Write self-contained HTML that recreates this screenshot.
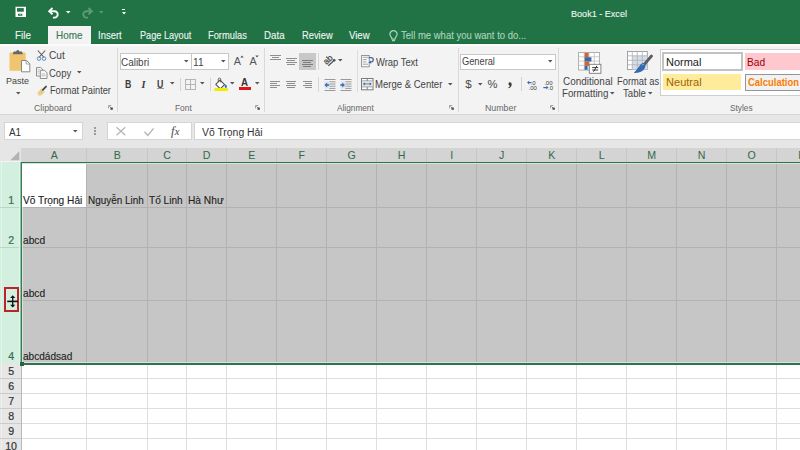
<!DOCTYPE html>
<html><head><meta charset="utf-8">
<style>
*{margin:0;padding:0;box-sizing:border-box}
html,body{width:800px;height:450px;overflow:hidden;background:#fff;font-family:"Liberation Sans",sans-serif;-webkit-font-smoothing:antialiased}
.a{position:absolute;white-space:nowrap;line-height:1}
.r{position:absolute}
svg{overflow:visible}
</style></head><body>
<div class="r" style="left:0px;top:0px;width:800px;height:44px;background:#217346;"></div>
<svg style="position:absolute;left:15px;top:6px" width="12" height="12" viewBox="0 0 12 12"><rect x="0.5" y="0.75" width="10.5" height="10.25" fill="#fff"/><rect x="2" y="2.1" width="6.8" height="3.6" fill="#217346"/><rect x="3" y="7.75" width="4.3" height="2" fill="#217346"/><rect x="4.8" y="7.75" width="0.8" height="1.2" fill="#fff"/></svg>
<svg style="position:absolute;left:48px;top:7px" width="12" height="11" viewBox="0 0 12 11"><path d="M4.5 1L1.2 4.2l3.3 3.2" fill="none" stroke="#fff" stroke-width="1.9"/><path d="M1.8 4.2h4.7a3.2 3.2 0 0 1 0 6.4h-1.5" fill="none" stroke="#fff" stroke-width="1.9"/></svg>
<svg style="position:absolute;left:66.25px;top:10.75px" width="4.5" height="2.5"><path d="M0 0h4.5l-2.25 2.5z" fill="#fff"/></svg>
<svg style="position:absolute;left:81px;top:7px" width="12" height="11" viewBox="0 0 12 11"><path d="M7.5 1l3.3 3.2-3.3 3.2" fill="none" stroke="#5f9a79" stroke-width="1.9"/><path d="M10.2 4.2h-4.7a3.2 3.2 0 0 0 0 6.4h1.5" fill="none" stroke="#5f9a79" stroke-width="1.9"/></svg>
<svg style="position:absolute;left:99.25px;top:10.75px" width="4.5" height="2.5"><path d="M0 0h4.5l-2.25 2.5z" fill="#5f9a79"/></svg>
<div class="r" style="left:122px;top:9px;width:3px;height:1.2px;background:#fff;"></div>
<svg style="position:absolute;left:121.50px;top:11.95px" width="4" height="2.5"><path d="M0 0h4l-2.0 2.5z" fill="#fff"/></svg>
<div class="r" style="left:0px;top:43px;width:48px;height:1px;background:#1e6c41;"></div>
<div class="r" style="left:91px;top:43px;width:709px;height:1px;background:#1e6c41;"></div>
<div class="r" style="left:48px;top:25.5px;width:43px;height:18.5px;background:#f3f3f3;"></div>
<svg style="position:absolute;left:388.5px;top:29.5px" width="9" height="12" viewBox="0 0 9 12"><path d="M4.5 0.7a3.6 3.6 0 0 0-3.6 3.6c0 1.5 1 2.4 1.7 3.3l0.4 1.6h3l0.4-1.6c0.7-0.9 1.7-1.8 1.7-3.3a3.6 3.6 0 0 0-3.6-3.6z" fill="none" stroke="#a8d5b8" stroke-width="1.2"/><path d="M3 10.6h3" stroke="#a8d5b8" stroke-width="1.3"/></svg>
<div class="r" style="left:0px;top:44px;width:800px;height:70px;background:#f3f3f3;"></div>
<div class="r" style="left:0px;top:44px;width:800px;height:1.5px;background:#fbfbfb;"></div>
<div class="r" style="left:0px;top:114px;width:800px;height:1px;background:#d6d6d6;"></div>
<svg style="position:absolute;left:8px;top:49px" width="24" height="25" viewBox="0 0 24 25"><rect x="1.5" y="3.4" width="16.2" height="18.4" rx="0.6" fill="#f0c56f"/><path d="M4.8 5.2l0.8-2.6h2.6a1.6 1.6 0 0 1 3.2 0h2.6l0.8 2.6z" fill="#666"/><path d="M13.5 11.5h5l3.3 3.3v8h-8.3z" fill="#fff" stroke="#7d7d7d" stroke-width="0.9"/><path d="M18.2 11.7v3.3h3.3" fill="none" stroke="#8a8a8a" stroke-width="0.8"/></svg>
<svg style="position:absolute;left:15.75px;top:92.05px" width="4.5" height="2.5"><path d="M0 0h4.5l-2.25 2.5z" fill="#555"/></svg>
<svg style="position:absolute;left:36px;top:49.5px" width="11" height="11" viewBox="0 0 11 11"><path d="M1.8 0.5l6.3 7M9.2 0.5L2.9 7.5" stroke="#5a5a5a" stroke-width="1.1"/><circle cx="3" cy="8.6" r="1.8" fill="none" stroke="#5d8dc8" stroke-width="1"/><circle cx="8" cy="8.6" r="1.8" fill="none" stroke="#5d8dc8" stroke-width="1"/></svg>
<svg style="position:absolute;left:36px;top:67px" width="11.5" height="12" viewBox="0 0 11.5 12"><path d="M0.5 0.5h4.2l2.3 2.3v6.2h-6.5z" fill="#f7f7f7" stroke="#858585" stroke-width="0.9"/><path d="M4.3 3.3h4.2l2.5 2.5v5.7h-6.7z" fill="#f7f7f7" stroke="#858585" stroke-width="0.9"/><path d="M5.6 7h3.8M5.6 8.8h3.8M1.6 2.6h2M1.6 4.4h1.8M1.6 6.2h1.8" stroke="#a5a5a5" stroke-width="0.7"/></svg>
<svg style="position:absolute;left:77.05px;top:71.05px" width="4.5" height="2.5"><path d="M0 0h4.5l-2.25 2.5z" fill="#555"/></svg>
<svg style="position:absolute;left:36.5px;top:84.5px" width="11" height="10.5" viewBox="0 0 11 10.5"><path d="M0.8 7.2l3.6-3.8 3.4 3.4-3.7 3.6c-1 0.4-2.6 0.2-3.3-0.4z" fill="#ead08c"/><path d="M3.2 5.5l2.6 2.6" stroke="#d6b664" stroke-width="0.7"/><path d="M5.8 4.8l3.2-3.2" stroke="#4a4a4a" stroke-width="1.9" stroke-linecap="round"/></svg>
<svg style="position:absolute;left:108.1px;top:105px" width="5" height="5" viewBox="0 0 5 5"><path d="M0.5 3.3V0.5H3.3" stroke="#9a9a9a" stroke-width="0.9" fill="none"/><path d="M1.5 1.5l2 2" stroke="#666" stroke-width="0.8"/><rect x="2.5" y="2.5" width="2.3" height="2.3" fill="#4a4a4a"/></svg>
<div class="r" style="left:117px;top:48px;width:1px;height:64px;background:#dadada;"></div>
<div class="r" style="left:120px;top:53px;width:109px;height:17px;background:#fff;border:1px solid #c8c8c8"></div>
<div class="r" style="left:191px;top:54px;width:1px;height:15px;background:#c8c8c8;"></div>
<svg style="position:absolute;left:183.75px;top:59.95px" width="4.5" height="2.5"><path d="M0 0h4.5l-2.25 2.5z" fill="#555"/></svg>
<svg style="position:absolute;left:221.25px;top:59.95px" width="4.5" height="2.5"><path d="M0 0h4.5l-2.25 2.5z" fill="#555"/></svg>
<div class="a" style="left:233.80px;top:56.13px;font-size:10.8px;color:#555;">A</div>
<svg style="position:absolute;left:239.5px;top:54.5px" width="4" height="3" viewBox="0 0 4 3"><path d="M0.3 2.6L2 0.4l1.7 2.2z" fill="#555"/></svg>
<div class="a" style="left:249.40px;top:56.13px;font-size:10.8px;color:#555;">A</div>
<svg style="position:absolute;left:255.2px;top:54.8px" width="4" height="3" viewBox="0 0 4 3"><path d="M0.3 0.4L2 2.6l1.7-2.2z" fill="#555"/></svg>
<div class="a" style="left:124.70px;top:80.32px;font-size:10.2px;color:#3c3c3c;font-weight:bold;transform:scaleX(0.86);transform-origin:0 0">B</div>
<div class="a" style="left:141.40px;top:79.62px;font-size:10.2px;color:#3c3c3c;font-style:italic;font-weight:bold;font-family:'Liberation Serif',serif">I</div>
<div class="a" style="left:156.80px;top:80.32px;font-size:10.2px;color:#3c3c3c;font-weight:bold;transform:scaleX(0.86);transform-origin:0 0">U</div>
<div class="r" style="left:157px;top:88.3px;width:6.6px;height:1.2px;background:#999;"></div>
<svg style="position:absolute;left:169.95px;top:82.05px" width="4.5" height="2.5"><path d="M0 0h4.5l-2.25 2.5z" fill="#555"/></svg>
<div class="r" style="left:179.5px;top:78px;width:1px;height:12.5px;background:#d3d3d3;"></div>
<svg style="position:absolute;left:185px;top:79px" width="11" height="11" viewBox="0 0 11 11"><rect x="0.5" y="0.5" width="10" height="10" fill="none" stroke="#b5b5b5"/><path d="M5.5 0.5v10M0.5 5.5h10" stroke="#b5b5b5"/></svg>
<svg style="position:absolute;left:199.95px;top:82.05px" width="4.5" height="2.5"><path d="M0 0h4.5l-2.25 2.5z" fill="#555"/></svg>
<div class="r" style="left:210px;top:78px;width:1px;height:12.5px;background:#d3d3d3;"></div>
<svg style="position:absolute;left:213.5px;top:77.5px" width="15" height="14" viewBox="0 0 15 14"><path d="M1.8 6.4l4.3-4.3 4.5 4.5-4.3 4.3z" fill="#fff" stroke="#505050" stroke-width="1.1" stroke-linejoin="round"/><path d="M4.3 3.9v-2.6a1.2 1.2 0 0 1 2.4 0v3.2" fill="none" stroke="#505050" stroke-width="0.9"/><path d="M10.3 6.3c1.3 0.1 2.2 0.8 2.6 1.8c0.3 1-0.3 2-1.2 1.8c-0.9-0.2-1-1.2-0.9-2z" fill="#3a78c2"/><rect x="0.3" y="10.1" width="13.7" height="3" rx="0.5" fill="#f2ec00"/></svg>
<svg style="position:absolute;left:229.95px;top:82.05px" width="4.5" height="2.5"><path d="M0 0h4.5l-2.25 2.5z" fill="#555"/></svg>
<div class="a" style="left:240.60px;top:77.16px;font-size:10.6px;color:#333;font-weight:bold;transform:scaleX(0.92);transform-origin:0 0">A</div>
<div class="r" style="left:238.8px;top:87px;width:12.5px;height:3px;background:#e01515;"></div>
<svg style="position:absolute;left:255.25px;top:82.05px" width="4.5" height="2.5"><path d="M0 0h4.5l-2.25 2.5z" fill="#555"/></svg>
<svg style="position:absolute;left:255.3px;top:105px" width="5" height="5" viewBox="0 0 5 5"><path d="M0.5 3.3V0.5H3.3" stroke="#9a9a9a" stroke-width="0.9" fill="none"/><path d="M1.5 1.5l2 2" stroke="#666" stroke-width="0.8"/><rect x="2.5" y="2.5" width="2.3" height="2.3" fill="#4a4a4a"/></svg>
<div class="r" style="left:263.5px;top:48px;width:1px;height:64px;background:#dadada;"></div>
<div class="r" style="left:269.5px;top:54.6px;width:11.2px;height:1px;background:#8e8e8e;"></div>
<div class="r" style="left:271.5px;top:56.6px;width:7.2px;height:1px;background:#8e8e8e;"></div>
<div class="r" style="left:269.5px;top:58.6px;width:11.2px;height:1px;background:#8e8e8e;"></div>
<div class="r" style="left:285.8px;top:57.9px;width:11.2px;height:1px;background:#8e8e8e;"></div>
<div class="r" style="left:287.3px;top:59.9px;width:8.2px;height:1px;background:#8e8e8e;"></div>
<div class="r" style="left:285.8px;top:61.9px;width:11.2px;height:1px;background:#8e8e8e;"></div>
<div class="r" style="left:287.3px;top:63.9px;width:8.2px;height:1px;background:#8e8e8e;"></div>
<div class="r" style="left:299.3px;top:52.8px;width:16.3px;height:16.9px;background:#c8c8c8;"></div>
<div class="r" style="left:301.6px;top:60.2px;width:11.2px;height:1px;background:#7c7c7c;"></div>
<div class="r" style="left:303.1px;top:62.2px;width:8.2px;height:1px;background:#7c7c7c;"></div>
<div class="r" style="left:301.6px;top:64.2px;width:11.2px;height:1px;background:#7c7c7c;"></div>
<div class="r" style="left:303.1px;top:66.2px;width:8.2px;height:1px;background:#7c7c7c;"></div>
<div class="r" style="left:318.4px;top:53px;width:1px;height:17px;background:#d6d6d6;"></div>
<svg style="position:absolute;left:322px;top:53px" width="15" height="15" viewBox="0 0 15 15"><text x="0" y="0" font-family="Liberation Sans" font-size="8.6" fill="#4a4a4a" stroke="#4a4a4a" stroke-width="0.25" transform="translate(4.6 12.1) rotate(-45)">ab</text><path d="M6.3 12.8l5.6-5.2" stroke="#4a4a4a" stroke-width="1.2"/><circle cx="12.2" cy="7.3" r="1.25" fill="#4a4a4a"/></svg>
<svg style="position:absolute;left:337.55px;top:59.45px" width="4.5" height="2.5"><path d="M0 0h4.5l-2.25 2.5z" fill="#555"/></svg>
<div class="r" style="left:270px;top:80.6px;width:9.6px;height:1px;background:#8e8e8e;"></div>
<div class="r" style="left:270px;top:82.8px;width:7.2px;height:1px;background:#8e8e8e;"></div>
<div class="r" style="left:270px;top:85.0px;width:9.6px;height:1px;background:#8e8e8e;"></div>
<div class="r" style="left:270px;top:87.2px;width:7.2px;height:1px;background:#8e8e8e;"></div>
<div class="r" style="left:285.8px;top:80.6px;width:10.5px;height:1px;background:#8e8e8e;"></div>
<div class="r" style="left:287.3px;top:82.8px;width:7.5px;height:1px;background:#8e8e8e;"></div>
<div class="r" style="left:285.8px;top:85.0px;width:10.5px;height:1px;background:#8e8e8e;"></div>
<div class="r" style="left:287.3px;top:87.2px;width:7.5px;height:1px;background:#8e8e8e;"></div>
<div class="r" style="left:302.5px;top:80.6px;width:9.6px;height:1px;background:#8e8e8e;"></div>
<div class="r" style="left:304.9px;top:82.8px;width:7.2px;height:1px;background:#8e8e8e;"></div>
<div class="r" style="left:302.5px;top:85.0px;width:9.6px;height:1px;background:#8e8e8e;"></div>
<div class="r" style="left:304.9px;top:87.2px;width:7.2px;height:1px;background:#8e8e8e;"></div>
<div class="r" style="left:318.4px;top:77px;width:1px;height:15px;background:#d6d6d6;"></div>
<svg style="position:absolute;left:323.5px;top:78.5px" width="12" height="12" viewBox="0 0 12 12"><path d="M0.5 0.5h11M5.3 2.8h6.2M5.3 5h6.2M5.3 7.2h6.2M5.3 9.4h6.2M0.5 11.5h11" stroke="#8e8e8e" stroke-width="0.9"/><rect x="0.3" y="2.5" width="4.8" height="7" fill="#dde6f0"/><path d="M0.4 6l2.8-2.6v5.2z" fill="#3b6db3"/><path d="M2.3 6h2.8" stroke="#3b6db3" stroke-width="1.6"/></svg>
<svg style="position:absolute;left:339.8px;top:78.5px" width="12" height="12" viewBox="0 0 12 12"><path d="M0.5 0.5h11M5.3 2.8h6.2M5.3 5h6.2M5.3 7.2h6.2M5.3 9.4h6.2M0.5 11.5h11" stroke="#8e8e8e" stroke-width="0.9"/><rect x="0.3" y="2.5" width="4.8" height="7" fill="#dde6f0"/><path d="M5 6l-2.8-2.6v5.2z" fill="#3b6db3"/><path d="M0.3 6h2.8" stroke="#3b6db3" stroke-width="1.6"/></svg>
<div class="r" style="left:356.5px;top:50px;width:1px;height:42px;background:#dcdcdc;"></div>
<svg style="position:absolute;left:361px;top:55px" width="13" height="12.5" viewBox="0 0 13 12.5"><rect x="0.6" y="0.5" width="7.6" height="11.3" fill="#fafafa" stroke="#8a8a8a" stroke-width="0.9"/><path d="M1.8 2.3h5.2M1.8 4.6h4M1.8 6.9h3.6M1.8 9.2h5.2" stroke="#9a9a9a" stroke-width="0.9"/><path d="M7.6 2.6h2.4a2.1 2.1 0 0 1 0.2 4.3l-1.6 0.6" fill="none" stroke="#3f66a3" stroke-width="1.3"/><path d="M7.3 7.8l2.4-2.3 0.6 3.1z" fill="#3f66a3"/></svg>
<svg style="position:absolute;left:361px;top:78px" width="12.5" height="12" viewBox="0 0 12.5 12"><rect x="0.5" y="0.5" width="11.5" height="11.3" fill="#fff" stroke="#7a7a7a" stroke-width="1"/><path d="M1 3h10.5M1 8.8h10.5M6.25 0.5v2.5M6.25 8.8v3" stroke="#7a7a7a" stroke-width="0.9"/><rect x="1" y="3.5" width="10.5" height="4.8" fill="#e3e9f1"/><path d="M3 5.9h6.5" stroke="#6d86a8" stroke-width="1.1"/><path d="M1.8 5.9l2-1.7v3.4zM10.7 5.9l-2-1.7v3.4z" fill="#4b6284"/></svg>
<svg style="position:absolute;left:447.55px;top:83.15px" width="4.5" height="2.5"><path d="M0 0h4.5l-2.25 2.5z" fill="#555"/></svg>
<svg style="position:absolute;left:449.3px;top:105px" width="5" height="5" viewBox="0 0 5 5"><path d="M0.5 3.3V0.5H3.3" stroke="#9a9a9a" stroke-width="0.9" fill="none"/><path d="M1.5 1.5l2 2" stroke="#666" stroke-width="0.8"/><rect x="2.5" y="2.5" width="2.3" height="2.3" fill="#4a4a4a"/></svg>
<div class="r" style="left:457.5px;top:48px;width:1px;height:64px;background:#dadada;"></div>
<div class="r" style="left:460px;top:53.5px;width:96px;height:16px;background:#fff;border:1px solid #c8c8c8"></div>
<svg style="position:absolute;left:548.25px;top:59.75px" width="4.5" height="2.5"><path d="M0 0h4.5l-2.25 2.5z" fill="#555"/></svg>
<div class="a" style="left:465.20px;top:77.60px;font-size:11.6px;color:#4a4a4a;">$</div>
<svg style="position:absolute;left:478.35px;top:83.15px" width="4.5" height="2.5"><path d="M0 0h4.5l-2.25 2.5z" fill="#555"/></svg>
<div class="a" style="left:487.60px;top:78.66px;font-size:11.2px;color:#4a4a4a;">%</div>
<svg style="position:absolute;left:506.5px;top:81.5px" width="5" height="6.5" viewBox="0 0 5 6.5"><path d="M2.6 0.2a2.1 2.1 0 0 1 2.1 2.3c0 1.8-1.2 3.2-3.2 3.8l-0.3-0.8c0.9-0.4 1.5-1 1.6-1.8a1.9 1.9 0 0 1-0.3-3.5z" fill="#3a3a3a"/></svg>
<div class="r" style="left:520.5px;top:77px;width:1px;height:14px;background:#d3d3d3;"></div>
<svg style="position:absolute;left:526.5px;top:80px" width="10" height="10" viewBox="0 0 10 10"><text x="3.6" y="5" font-family="Liberation Sans" font-size="6" fill="#3a3a3a">.0</text><text x="1.5" y="10" font-family="Liberation Sans" font-size="6" fill="#3a3a3a">.00</text><path d="M1.5 2.6h3" stroke="#2e6dbb" stroke-width="1.2"/><path d="M0 2.6l2.2-1.8v3.6z" fill="#2e6dbb"/></svg>
<svg style="position:absolute;left:542.5px;top:80px" width="10" height="10" viewBox="0 0 10 10"><text x="1.2" y="5" font-family="Liberation Sans" font-size="6" fill="#3a3a3a">.00</text><text x="5" y="10" font-family="Liberation Sans" font-size="6" fill="#3a3a3a">.0</text><path d="M0.3 7.6h3.5" stroke="#2e6dbb" stroke-width="1.2"/><path d="M5.5 7.6l-2.2-1.8v3.6z" fill="#2e6dbb"/></svg>
<svg style="position:absolute;left:549.8px;top:105px" width="5" height="5" viewBox="0 0 5 5"><path d="M0.5 3.3V0.5H3.3" stroke="#9a9a9a" stroke-width="0.9" fill="none"/><path d="M1.5 1.5l2 2" stroke="#666" stroke-width="0.8"/><rect x="2.5" y="2.5" width="2.3" height="2.3" fill="#4a4a4a"/></svg>
<div class="r" style="left:558px;top:48px;width:1px;height:64px;background:#dadada;"></div>
<svg style="position:absolute;left:578px;top:51.5px" width="25" height="22" viewBox="0 0 25 22"><rect x="0.5" y="0.5" width="21" height="17.5" fill="#fff" stroke="#a8a8a8" stroke-width="0.9"/><path d="M0.5 4.8h21M0.5 9.1h21M0.5 13.4h21M6.3 0.5v17.5M11 0.5v17.5M16.3 0.5v17.5" stroke="#c0c0c0" stroke-width="0.8"/><rect x="6.6" y="0.8" width="4" height="4.8" fill="#d9612a"/><rect x="6.6" y="5.3" width="6.8" height="4.2" fill="#3569b0"/><rect x="6.6" y="9.5" width="4.6" height="4.3" fill="#d9612a"/><rect x="6.6" y="13.8" width="3" height="4" fill="#3569b0"/><rect x="11.3" y="12.3" width="11.6" height="9" fill="#fff" stroke="#7a7a7a" stroke-width="0.9"/><path d="M14.2 15.6h6M14.2 18h6M18.9 13.8l-3.4 6" stroke="#333" stroke-width="0.95"/></svg>
<svg style="position:absolute;left:610.15px;top:91.95px" width="4.5" height="2.5"><path d="M0 0h4.5l-2.25 2.5z" fill="#555"/></svg>
<svg style="position:absolute;left:627px;top:51px" width="27" height="23" viewBox="0 0 27 23"><rect x="0.5" y="0.5" width="19.8" height="18" fill="#fff" stroke="#9a9a9a" stroke-width="0.9"/><rect x="5.3" y="4.8" width="15" height="13.7" fill="#d3dee9"/><path d="M0.5 4.8h19.8M0.5 9.3h19.8M0.5 13.8h19.8M5.3 0.5v18M10.3 0.5v18M15.3 0.5v18" stroke="#b0b0b0" stroke-width="0.8"/><path d="M24.5 5l-7 8.2" stroke="#5c5c5c" stroke-width="2.8" stroke-linecap="round"/><path d="M17.8 12.2c-1.5-0.6-3.2 0-4.5 1.5c-1.3 1.5-2.6 4.5-6.5 8.2c4.2 0.3 8.6-1.3 10.5-4c1.2-1.7 1.6-3.9 0.5-5.7z" fill="#3468b0"/><path d="M14.6 14.2c0.8-0.8 1.8-0.9 2.4-0.3" stroke="#9fc0e8" stroke-width="0.8" fill="none"/></svg>
<svg style="position:absolute;left:648.35px;top:91.95px" width="4.5" height="2.5"><path d="M0 0h4.5l-2.25 2.5z" fill="#555"/></svg>
<div class="r" style="left:660px;top:48.5px;width:150px;height:47px;background:#fff;border:1px solid #cfcfcf"></div>
<div class="r" style="left:661.5px;top:52px;width:81.5px;height:19px;background:#fff;border:2px solid #c2c2c2"></div>
<div class="r" style="left:745px;top:53px;width:60px;height:16.5px;background:#ffc7ce;"></div>
<div class="r" style="left:663px;top:73.5px;width:78px;height:16.5px;background:#ffeb9c;"></div>
<div class="r" style="left:745px;top:73.5px;width:60px;height:17px;background:#f2f2f2;border:1px solid #959595"></div>
<div class="r" style="left:0px;top:115px;width:800px;height:33px;background:#e6e6e6;"></div>
<div class="r" style="left:3.5px;top:121.5px;width:79.5px;height:18.5px;background:#fff;border:1px solid #d5d5d5"></div>
<svg style="position:absolute;left:73.15px;top:129.65px" width="4.5" height="2.5"><path d="M0 0h4.5l-2.25 2.5z" fill="#555"/></svg>
<div class="r" style="left:94px;top:127.0px;width:1.5px;height:1.6px;background:#9a9a9a;"></div>
<div class="r" style="left:94px;top:130.2px;width:1.5px;height:1.6px;background:#9a9a9a;"></div>
<div class="r" style="left:94px;top:133.4px;width:1.5px;height:1.6px;background:#9a9a9a;"></div>
<div class="r" style="left:106.5px;top:121.5px;width:85px;height:18.5px;background:#fff;border:1px solid #d5d5d5"></div>
<svg style="position:absolute;left:115.5px;top:127.4px" width="10" height="8.5" viewBox="0 0 10 8.5"><path d="M0.5 0.3l8.8 7.9M9.3 0.3l-8.8 7.9" stroke="#b4b4b4" stroke-width="1.2"/></svg>
<svg style="position:absolute;left:144px;top:127.6px" width="10" height="8" viewBox="0 0 10 8"><path d="M0.5 3.8l3.3 3.6 5.8-7" fill="none" stroke="#b4b4b4" stroke-width="1.3"/></svg>
<div class="a" style="left:171.0px;top:125.2px;font-size:12.5px;color:#555;font-family:'Liberation Serif',serif;font-style:italic;-webkit-text-stroke:0.1px #555">f<span style="font-size:10.5px;margin-left:0.3px">x</span></div>
<div class="r" style="left:193.5px;top:121.5px;width:620px;height:18.5px;background:#fff;border:1px solid #d5d5d5"></div>
<div class="r" style="left:0px;top:148px;width:21px;height:14px;background:#e6e6e6;"></div>
<svg style="position:absolute;left:9.5px;top:151px" width="10" height="10" viewBox="0 0 10 10"><path d="M9.3 0.3v9h-9z" fill="#b3b3b3"/></svg>
<div class="r" style="left:0px;top:161px;width:21px;height:1px;background:#f4f4f4;"></div>
<div class="r" style="left:21px;top:148px;width:779px;height:14px;background:#d4d4d4;"></div>
<div class="r" style="left:86px;top:148px;width:1px;height:14px;background:#c6c6c6;"></div>
<div class="a" style="left:21.7px;top:150.44px;width:65px;text-align:center;font-size:10.6px;color:#2f6a4a">A</div>
<div class="r" style="left:147px;top:148px;width:1px;height:14px;background:#c6c6c6;"></div>
<div class="a" style="left:86.7px;top:150.44px;width:61px;text-align:center;font-size:10.6px;color:#2f6a4a">B</div>
<div class="r" style="left:186px;top:148px;width:1px;height:14px;background:#c6c6c6;"></div>
<div class="a" style="left:147.7px;top:150.44px;width:39px;text-align:center;font-size:10.6px;color:#2f6a4a">C</div>
<div class="r" style="left:226px;top:148px;width:1px;height:14px;background:#c6c6c6;"></div>
<div class="a" style="left:186.7px;top:150.44px;width:40px;text-align:center;font-size:10.6px;color:#2f6a4a">D</div>
<div class="r" style="left:276px;top:148px;width:1px;height:14px;background:#c6c6c6;"></div>
<div class="a" style="left:226.7px;top:150.44px;width:50px;text-align:center;font-size:10.6px;color:#2f6a4a">E</div>
<div class="r" style="left:326px;top:148px;width:1px;height:14px;background:#c6c6c6;"></div>
<div class="a" style="left:276.7px;top:150.44px;width:50px;text-align:center;font-size:10.6px;color:#2f6a4a">F</div>
<div class="r" style="left:376px;top:148px;width:1px;height:14px;background:#c6c6c6;"></div>
<div class="a" style="left:326.7px;top:150.44px;width:50px;text-align:center;font-size:10.6px;color:#2f6a4a">G</div>
<div class="r" style="left:426px;top:148px;width:1px;height:14px;background:#c6c6c6;"></div>
<div class="a" style="left:376.7px;top:150.44px;width:50px;text-align:center;font-size:10.6px;color:#2f6a4a">H</div>
<div class="r" style="left:476px;top:148px;width:1px;height:14px;background:#c6c6c6;"></div>
<div class="a" style="left:426.7px;top:150.44px;width:50px;text-align:center;font-size:10.6px;color:#2f6a4a">I</div>
<div class="r" style="left:526px;top:148px;width:1px;height:14px;background:#c6c6c6;"></div>
<div class="a" style="left:476.7px;top:150.44px;width:50px;text-align:center;font-size:10.6px;color:#2f6a4a">J</div>
<div class="r" style="left:576px;top:148px;width:1px;height:14px;background:#c6c6c6;"></div>
<div class="a" style="left:526.7px;top:150.44px;width:50px;text-align:center;font-size:10.6px;color:#2f6a4a">K</div>
<div class="r" style="left:626px;top:148px;width:1px;height:14px;background:#c6c6c6;"></div>
<div class="a" style="left:576.7px;top:150.44px;width:50px;text-align:center;font-size:10.6px;color:#2f6a4a">L</div>
<div class="r" style="left:676px;top:148px;width:1px;height:14px;background:#c6c6c6;"></div>
<div class="a" style="left:626.7px;top:150.44px;width:50px;text-align:center;font-size:10.6px;color:#2f6a4a">M</div>
<div class="r" style="left:726px;top:148px;width:1px;height:14px;background:#c6c6c6;"></div>
<div class="a" style="left:676.7px;top:150.44px;width:50px;text-align:center;font-size:10.6px;color:#2f6a4a">N</div>
<div class="r" style="left:776px;top:148px;width:1px;height:14px;background:#c6c6c6;"></div>
<div class="a" style="left:726.7px;top:150.44px;width:50px;text-align:center;font-size:10.6px;color:#2f6a4a">O</div>
<div class="r" style="left:826px;top:148px;width:1px;height:14px;background:#c6c6c6;"></div>
<div class="a" style="left:776.7px;top:150.44px;width:50px;text-align:center;font-size:10.6px;color:#2f6a4a">P</div>
<div class="r" style="left:21px;top:162px;width:779px;height:201px;background:#c6c6c6;"></div>
<div class="r" style="left:22px;top:163px;width:64px;height:44px;background:#fff;"></div>
<div class="r" style="left:86px;top:162px;width:1px;height:201px;background:#b2b2b2;"></div>
<div class="r" style="left:147px;top:162px;width:1px;height:201px;background:#b2b2b2;"></div>
<div class="r" style="left:186px;top:162px;width:1px;height:201px;background:#b2b2b2;"></div>
<div class="r" style="left:226px;top:162px;width:1px;height:201px;background:#b2b2b2;"></div>
<div class="r" style="left:276px;top:162px;width:1px;height:201px;background:#b2b2b2;"></div>
<div class="r" style="left:326px;top:162px;width:1px;height:201px;background:#b2b2b2;"></div>
<div class="r" style="left:376px;top:162px;width:1px;height:201px;background:#b2b2b2;"></div>
<div class="r" style="left:426px;top:162px;width:1px;height:201px;background:#b2b2b2;"></div>
<div class="r" style="left:476px;top:162px;width:1px;height:201px;background:#b2b2b2;"></div>
<div class="r" style="left:526px;top:162px;width:1px;height:201px;background:#b2b2b2;"></div>
<div class="r" style="left:576px;top:162px;width:1px;height:201px;background:#b2b2b2;"></div>
<div class="r" style="left:626px;top:162px;width:1px;height:201px;background:#b2b2b2;"></div>
<div class="r" style="left:676px;top:162px;width:1px;height:201px;background:#b2b2b2;"></div>
<div class="r" style="left:726px;top:162px;width:1px;height:201px;background:#b2b2b2;"></div>
<div class="r" style="left:776px;top:162px;width:1px;height:201px;background:#b2b2b2;"></div>
<div class="r" style="left:826px;top:162px;width:1px;height:201px;background:#b2b2b2;"></div>
<div class="r" style="left:21px;top:207px;width:779px;height:1px;background:#b2b2b2;"></div>
<div class="r" style="left:21px;top:247px;width:779px;height:1px;background:#b2b2b2;"></div>
<div class="r" style="left:21px;top:300px;width:779px;height:1px;background:#b2b2b2;"></div>
<div class="r" style="left:22px;top:207px;width:64px;height:1px;background:#b2b2b2;"></div>
<div class="r" style="left:0px;top:162px;width:21px;height:201px;background:#d3efdf;"></div>
<div class="r" style="left:1px;top:162px;width:1px;height:201px;background:#e2f6ea;"></div>
<div class="r" style="left:0px;top:207px;width:20px;height:1px;background:#b6d8c4;"></div>
<div class="r" style="left:0px;top:247px;width:20px;height:1px;background:#b6d8c4;"></div>
<div class="a" style="left:0.6px;top:194.84px;width:21px;text-align:center;font-size:10.6px;color:#3b6b51;-webkit-text-stroke:0.2px #3b6b51">1</div>
<div class="a" style="left:0.6px;top:234.84px;width:21px;text-align:center;font-size:10.6px;color:#3b6b51;-webkit-text-stroke:0.2px #3b6b51">2</div>
<div class="a" style="left:0.6px;top:350.84px;width:21px;text-align:center;font-size:10.6px;color:#3b6b51;-webkit-text-stroke:0.2px #3b6b51">4</div>
<div class="r" style="left:0px;top:363px;width:21px;height:87px;background:#e6e6e6;"></div>
<div class="r" style="left:1px;top:363px;width:1px;height:87px;background:#efefef;"></div>
<div class="r" style="left:0px;top:378px;width:21px;height:1px;background:#cbcbcb;"></div>
<div class="a" style="left:0.6px;top:366.04px;width:21px;text-align:center;font-size:10.6px;color:#333;-webkit-text-stroke:0.2px #333">5</div>
<div class="r" style="left:0px;top:393px;width:21px;height:1px;background:#cbcbcb;"></div>
<div class="a" style="left:0.6px;top:381.04px;width:21px;text-align:center;font-size:10.6px;color:#333;-webkit-text-stroke:0.2px #333">6</div>
<div class="r" style="left:0px;top:408px;width:21px;height:1px;background:#cbcbcb;"></div>
<div class="a" style="left:0.6px;top:396.04px;width:21px;text-align:center;font-size:10.6px;color:#333;-webkit-text-stroke:0.2px #333">7</div>
<div class="r" style="left:0px;top:423px;width:21px;height:1px;background:#cbcbcb;"></div>
<div class="a" style="left:0.6px;top:411.04px;width:21px;text-align:center;font-size:10.6px;color:#333;-webkit-text-stroke:0.2px #333">8</div>
<div class="r" style="left:0px;top:438px;width:21px;height:1px;background:#cbcbcb;"></div>
<div class="a" style="left:0.6px;top:426.04px;width:21px;text-align:center;font-size:10.6px;color:#333;-webkit-text-stroke:0.2px #333">9</div>
<div class="r" style="left:0px;top:453px;width:21px;height:1px;background:#cbcbcb;"></div>
<div class="a" style="left:0.6px;top:441.04px;width:21px;text-align:center;font-size:10.6px;color:#333;-webkit-text-stroke:0.2px #333">10</div>
<div class="r" style="left:21px;top:363px;width:1px;height:87px;background:#b8b8b8;"></div>
<div class="r" style="left:22px;top:378px;width:778px;height:1px;background:#dedede;"></div>
<div class="r" style="left:22px;top:393px;width:778px;height:1px;background:#dedede;"></div>
<div class="r" style="left:22px;top:408px;width:778px;height:1px;background:#dedede;"></div>
<div class="r" style="left:22px;top:423px;width:778px;height:1px;background:#dedede;"></div>
<div class="r" style="left:22px;top:438px;width:778px;height:1px;background:#dedede;"></div>
<div class="r" style="left:22px;top:453px;width:778px;height:1px;background:#dedede;"></div>
<div class="r" style="left:86px;top:364px;width:1px;height:86px;background:#dedede;"></div>
<div class="r" style="left:147px;top:364px;width:1px;height:86px;background:#dedede;"></div>
<div class="r" style="left:186px;top:364px;width:1px;height:86px;background:#dedede;"></div>
<div class="r" style="left:226px;top:364px;width:1px;height:86px;background:#dedede;"></div>
<div class="r" style="left:276px;top:364px;width:1px;height:86px;background:#dedede;"></div>
<div class="r" style="left:326px;top:364px;width:1px;height:86px;background:#dedede;"></div>
<div class="r" style="left:376px;top:364px;width:1px;height:86px;background:#dedede;"></div>
<div class="r" style="left:426px;top:364px;width:1px;height:86px;background:#dedede;"></div>
<div class="r" style="left:476px;top:364px;width:1px;height:86px;background:#dedede;"></div>
<div class="r" style="left:526px;top:364px;width:1px;height:86px;background:#dedede;"></div>
<div class="r" style="left:576px;top:364px;width:1px;height:86px;background:#dedede;"></div>
<div class="r" style="left:626px;top:364px;width:1px;height:86px;background:#dedede;"></div>
<div class="r" style="left:676px;top:364px;width:1px;height:86px;background:#dedede;"></div>
<div class="r" style="left:726px;top:364px;width:1px;height:86px;background:#dedede;"></div>
<div class="r" style="left:776px;top:364px;width:1px;height:86px;background:#dedede;"></div>
<div class="r" style="left:826px;top:364px;width:1px;height:86px;background:#dedede;"></div>
<div class="r" style="left:21px;top:162px;width:779px;height:1px;background:#33704f;"></div>
<div class="r" style="left:21px;top:163px;width:779px;height:1px;background:#cfe9da;"></div>
<div class="r" style="left:19px;top:162px;width:1px;height:202px;background:#ddf6e8;"></div>
<div class="r" style="left:20px;top:162px;width:1px;height:202px;background:#8dbfa2;"></div>
<div class="r" style="left:21px;top:162px;width:1px;height:202px;background:#3b7a57;"></div>
<div class="r" style="left:21px;top:362px;width:779px;height:1px;background:#cfe9da;"></div>
<div class="r" style="left:22px;top:207px;width:1px;height:155px;background:#d3e6da;"></div>
<div class="r" style="left:21px;top:363px;width:779px;height:1.5px;background:#33704f;"></div>
<div class="r" style="left:20px;top:362px;width:3.5px;height:3.5px;background:#2a6244;"></div>
<div class="a" style="left:570.99px;top:8.87px;font-size:9.71px;color:#f4f8f6;transform:scaleX(0.9345731841264051);transform-origin:0 0;-webkit-text-stroke:0.1px #f4f8f6;">Book1 - Excel</div>
<div class="a" style="left:14.67px;top:30.80px;font-size:10.1px;color:#f0f6f2;transform:scaleX(0.976653663619378);transform-origin:0 0;-webkit-text-stroke:0.1px #f0f6f2;">File</div>
<div class="a" style="left:55.90px;top:30.80px;font-size:10.1px;color:#3f7a5a;transform:scaleX(0.9834626448340925);transform-origin:0 0;-webkit-text-stroke:0.15px #3f7a5a;">Home</div>
<div class="a" style="left:98.45px;top:30.80px;font-size:10.1px;color:#f0f6f2;transform:scaleX(0.9389028181254304);transform-origin:0 0;-webkit-text-stroke:0.1px #f0f6f2;">Insert</div>
<div class="a" style="left:139.61px;top:30.80px;font-size:10.1px;color:#f0f6f2;transform:scaleX(0.9053479440367816);transform-origin:0 0;-webkit-text-stroke:0.1px #f0f6f2;">Page Layout</div>
<div class="a" style="left:207.56px;top:30.80px;font-size:10.1px;color:#f0f6f2;transform:scaleX(0.9227318518583478);transform-origin:0 0;-webkit-text-stroke:0.1px #f0f6f2;">Formulas</div>
<div class="a" style="left:263.50px;top:30.80px;font-size:10.1px;color:#f0f6f2;transform:scaleX(0.9649910374387096);transform-origin:0 0;-webkit-text-stroke:0.1px #f0f6f2;">Data</div>
<div class="a" style="left:301.57px;top:30.80px;font-size:10.1px;color:#f0f6f2;transform:scaleX(0.9260533483262279);transform-origin:0 0;-webkit-text-stroke:0.1px #f0f6f2;">Review</div>
<div class="a" style="left:349.26px;top:30.80px;font-size:10.1px;color:#f0f6f2;transform:scaleX(0.9512284265403029);transform-origin:0 0;-webkit-text-stroke:0.1px #f0f6f2;">View</div>
<div class="a" style="left:401.19px;top:30.80px;font-size:10.1px;color:#acd6bb;transform:scaleX(0.9416331814144557);transform-origin:0 0;-webkit-text-stroke:0.1px #acd6bb;">Tell me what you want to do...</div>
<div class="a" style="left:6.19px;top:76.27px;font-size:9.5px;color:#444;transform:scaleX(0.9447506205993751);transform-origin:0 0;-webkit-text-stroke:0.0px #444;">Paste</div>
<div class="a" style="left:48.95px;top:51.45px;font-size:10.0px;color:#444;transform:scaleX(1.008736746658824);transform-origin:0 0;-webkit-text-stroke:0.0px #444;">Cut</div>
<div class="a" style="left:48.82px;top:69.19px;font-size:10.0px;color:#444;transform:scaleX(0.9514864315136042);transform-origin:0 0;-webkit-text-stroke:0.0px #444;">Copy</div>
<div class="a" style="left:49.58px;top:86.32px;font-size:10.0px;color:#444;transform:scaleX(0.920640214562667);transform-origin:0 0;-webkit-text-stroke:0.0px #444;">Format Painter</div>
<div class="a" style="left:33.74px;top:103.98px;font-size:8.6px;color:#666;transform:scaleX(1.0197902654925584);transform-origin:0 0;-webkit-text-stroke:0.0px #666;">Clipboard</div>
<div class="a" style="left:120.79px;top:57.50px;font-size:10.0px;color:#444;transform:scaleX(0.9934976799839336);transform-origin:0 0;-webkit-text-stroke:0.0px #444;">Calibri</div>
<div class="a" style="left:192.78px;top:57.50px;font-size:10.0px;color:#444;transform:scaleX(1.0162689716672102);transform-origin:0 0;-webkit-text-stroke:0.0px #444;">11</div>
<div class="a" style="left:175.46px;top:103.98px;font-size:8.6px;color:#666;transform:scaleX(0.9720877138104468);transform-origin:0 0;-webkit-text-stroke:0.0px #666;">Font</div>
<div class="a" style="left:375.86px;top:57.75px;font-size:10.0px;color:#444;transform:scaleX(0.9390350385972006);transform-origin:0 0;-webkit-text-stroke:0.0px #444;">Wrap Text</div>
<div class="a" style="left:375.10px;top:80.07px;font-size:10.0px;color:#444;transform:scaleX(0.9541827785918119);transform-origin:0 0;-webkit-text-stroke:0.0px #444;">Merge &amp; Center</div>
<div class="a" style="left:336.80px;top:103.50px;font-size:8.6px;color:#666;transform:scaleX(0.961905985074867);transform-origin:0 0;-webkit-text-stroke:0.0px #666;">Alignment</div>
<div class="a" style="left:462.15px;top:57.27px;font-size:10.0px;color:#444;transform:scaleX(0.9255282729488162);transform-origin:0 0;-webkit-text-stroke:0.0px #444;">General</div>
<div class="a" style="left:485.40px;top:103.50px;font-size:8.6px;color:#666;transform:scaleX(1.0253571496338008);transform-origin:0 0;-webkit-text-stroke:0.0px #666;">Number</div>
<div class="a" style="left:563.29px;top:76.90px;font-size:10.0px;color:#444;transform:scaleX(0.9911661676901304);transform-origin:0 0;-webkit-text-stroke:0.0px #444;">Conditional</div>
<div class="a" style="left:562.33px;top:88.90px;font-size:10.0px;color:#444;transform:scaleX(0.9693575606504133);transform-origin:0 0;-webkit-text-stroke:0.0px #444;">Formatting</div>
<div class="a" style="left:616.52px;top:76.90px;font-size:10.0px;color:#444;transform:scaleX(0.9348592461377625);transform-origin:0 0;-webkit-text-stroke:0.0px #444;">Format as</div>
<div class="a" style="left:623.24px;top:88.90px;font-size:10.0px;color:#444;transform:scaleX(0.9606335882785743);transform-origin:0 0;-webkit-text-stroke:0.0px #444;">Table</div>
<div class="a" style="left:665.75px;top:57.65px;font-size:10.2px;color:#222;transform:scaleX(1.0769830053506015);transform-origin:0 0;-webkit-text-stroke:0.0px #222;">Normal</div>
<div class="a" style="left:747.42px;top:57.65px;font-size:10.2px;color:#9c0006;transform:scaleX(1.0000053227824577);transform-origin:0 0;-webkit-text-stroke:0.0px #9c0006;">Bad</div>
<div class="a" style="left:665.66px;top:77.88px;font-size:10.2px;color:#9c6500;transform:scaleX(1.0849633585147829);transform-origin:0 0;-webkit-text-stroke:0.0px #9c6500;">Neutral</div>
<div class="a" style="left:747.84px;top:77.88px;font-size:10.2px;color:#fa7d00;transform:scaleX(0.9285107545994098);transform-origin:0 0;-webkit-text-stroke:0.0px #fa7d00;font-weight:bold">Calculation</div>
<div class="a" style="left:729.64px;top:103.55px;font-size:8.6px;color:#666;transform:scaleX(0.9658444407119559);transform-origin:0 0;-webkit-text-stroke:0.0px #666;">Styles</div>
<div class="a" style="left:8.54px;top:127.92px;font-size:10.0px;color:#333;transform:scaleX(0.9931671697701304);transform-origin:0 0;-webkit-text-stroke:0.0px #333;">A1</div>
<div class="a" style="left:202.18px;top:127.70px;font-size:10.0px;color:#333;transform:scaleX(1.0388706320233132);transform-origin:0 0;-webkit-text-stroke:0.0px #333;">Võ Trọng Hải</div>
<div class="a" style="left:23.30px;top:195.00px;font-size:10.6px;color:#222;transform:scaleX(0.9601445137887991);transform-origin:0 0;-webkit-text-stroke:0.12px #222;">Võ Trọng Hải</div>
<div class="a" style="left:87.76px;top:195.00px;font-size:10.6px;color:#222;transform:scaleX(0.9396834462833576);transform-origin:0 0;-webkit-text-stroke:0.12px #222;">Nguyễn Linh</div>
<div class="a" style="left:149.46px;top:195.00px;font-size:10.6px;color:#222;transform:scaleX(0.9511286048196331);transform-origin:0 0;-webkit-text-stroke:0.12px #222;">Tố Linh</div>
<div class="a" style="left:187.68px;top:195.00px;font-size:10.6px;color:#222;transform:scaleX(0.9617959655128178);transform-origin:0 0;-webkit-text-stroke:0.12px #222;">Hà Như</div>
<div class="a" style="left:23.45px;top:234.59px;font-size:10.6px;color:#222;transform:scaleX(0.9630750458397584);transform-origin:0 0;-webkit-text-stroke:0.12px #222;">abcd</div>
<div class="a" style="left:23.45px;top:288.44px;font-size:10.6px;color:#222;transform:scaleX(0.9630750458397584);transform-origin:0 0;-webkit-text-stroke:0.12px #222;">abcd</div>
<div class="a" style="left:23.33px;top:351.04px;font-size:10.6px;color:#222;transform:scaleX(0.9501270760180538);transform-origin:0 0;-webkit-text-stroke:0.12px #222;">abcdádsad</div>
<div class="r" style="left:4px;top:287px;width:15px;height:25px;border:2px solid #bb2429"></div>
<svg style="position:absolute;left:6.5px;top:294.5px" width="11" height="13" viewBox="0 0 11 13"><path d="M5.7 2v9" stroke="#111" stroke-width="1.3"/><path d="M0.2 6.4h10.6" stroke="#111" stroke-width="1.6"/><path d="M5.7 0.2l-2.6 2.8h5.2zM5.7 12.6l-2.6-2.8h5.2z" fill="#111"/></svg>
</body></html>
